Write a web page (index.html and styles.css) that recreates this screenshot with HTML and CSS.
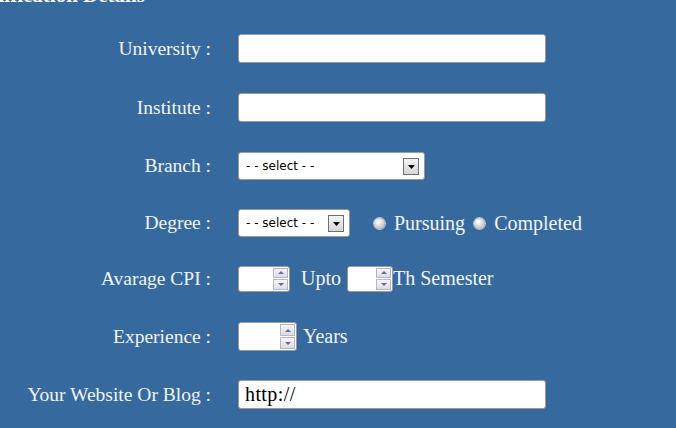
FILE: index.html
```html
<!DOCTYPE html>
<html>
<head>
<meta charset="utf-8">
<link rel="stylesheet" href="styles.css">
</head>
<body>
<h2 class="title">Qualification Details</h2>
<form class="form">
  <label class="lbl">University :</label>
  <div class="field"><input class="text" type="text"></div>

  <label class="lbl">Institute :</label>
  <div class="field"><input class="text" type="text"></div>

  <label class="lbl">Branch :</label>
  <div class="field">
    <div class="sel sel-wide"><span class="sel-text">- - select - -</span><span class="sel-btn"><svg width="7" height="4" viewBox="0 0 7 4"><path d="M0 0H7L3.5 4Z" fill="#000"/></svg></span></div>
  </div>

  <label class="lbl">Degree :</label>
  <div class="field">
    <div class="sel sel-narrow"><span class="sel-text">- - select - -</span><span class="sel-btn"><svg width="7" height="4" viewBox="0 0 7 4"><path d="M0 0H7L3.5 4Z" fill="#000"/></svg></span></div>
    <span class="radio"></span><span class="opt">Pursuing</span>
    <span class="radio"></span><span class="opt">Completed</span>
  </div>

  <label class="lbl">Avarage CPI :</label>
  <div class="field">
    <div class="num num-cpi"><span class="spin"><span class="sp up"><svg width="6" height="3" viewBox="0 0 6 3"><path d="M0 3H6L3 0Z" fill="#6a6a9a"/></svg></span><span class="sp dn"><svg width="6" height="3" viewBox="0 0 6 3"><path d="M0 0H6L3 3Z" fill="#6a6a9a"/></svg></span></span></div>
    <span class="word upto">Upto</span>
    <div class="num num-sem"><span class="spin"><span class="sp up"><svg width="6" height="3" viewBox="0 0 6 3"><path d="M0 3H6L3 0Z" fill="#6a6a9a"/></svg></span><span class="sp dn"><svg width="6" height="3" viewBox="0 0 6 3"><path d="M0 0H6L3 3Z" fill="#6a6a9a"/></svg></span></span></div>
    <span class="word">Th Semester</span>
  </div>

  <label class="lbl">Experience :</label>
  <div class="field">
    <div class="num num-exp"><span class="spin"><span class="sp up"><svg width="6" height="3" viewBox="0 0 6 3"><path d="M0 3H6L3 0Z" fill="#6a6a9a"/></svg></span><span class="sp dn"><svg width="6" height="3" viewBox="0 0 6 3"><path d="M0 0H6L3 3Z" fill="#6a6a9a"/></svg></span></span></div>
    <span class="word years">Years</span>
  </div>

  <label class="lbl">Your Website Or Blog :</label>
  <div class="field"><input class="text url" type="text" value="http://"></div>
</form>
</body>
</html>
```
FILE: styles.css
```css
html, body {
  margin: 0;
  padding: 0;
  background: #366a9f;
  overflow: hidden;
}
body {
  width: 676px;
  height: 428px;
  font-family: "Liberation Serif", "DejaVu Serif", serif;
  color: #f2f4f8;
}
.title {
  margin: -15px 0 0 -40px;
  height: 34px;
  font-size: 21px;
  line-height: 20px;
  font-weight: bold;
  color: #fff;
}
.form {
  display: grid;
  grid-template-columns: 211px 1fr;
  grid-template-rows: 59px 59px 58px 56px 55px 61px 55px;
  column-gap: 27px;
  align-items: center;
}
.lbl {
  text-align: right;
  font-size: 19.5px;
  white-space: nowrap;
}
.field {
  display: flex;
  align-items: center;
}
.text {
  box-sizing: border-box;
  width: 308px;
  height: 29px;
  border: 1px solid #9a9a9a;
  border-radius: 3px;
  background: #fff;
  padding: 0 6px;
  font-family: "Liberation Serif", serif;
  font-size: 20px;
  color: #000;
  outline: none;
}
.sel {
  position: relative;
  box-sizing: border-box;
  height: 28px;
  background: #fff;
  border: 1px solid #9a9a9a;
  border-radius: 3px;
  display: flex;
  align-items: center;
  padding-left: 7px;
}
.sel-wide { width: 187px; }
.sel-narrow { width: 112px; }
.sel-text {
  font-family: "DejaVu Sans", sans-serif;
  font-size: 12px;
  color: #000;
}
.sel-btn {
  position: absolute;
  right: 5px;
  top: 5px;
  box-sizing: border-box;
  width: 16px;
  height: 17px;
  border: 1px solid #6f6f6f;
  background: linear-gradient(#f4f4f4, #d6d6d6);
  display: flex;
  align-items: center;
  justify-content: center;
}
.radio {
  width: 11px;
  height: 11px;
  border-radius: 50%;
  background: radial-gradient(circle at 40% 35%, #ffffff 0, #e2e2e2 35%, #a9a9a9 100%);
  box-shadow: 0 0 0 1px #b9c6d6;
  margin-left: 24px;
  margin-right: 9px;
}
.opt + .radio { margin-left: 9px; }
.opt {
  font-size: 20px;
}
.num {
  position: relative;
  box-sizing: border-box;
  height: 26px;
  background: #fff;
  border: 1px solid #9a9a9a;
  border-radius: 3px;
}
.num-cpi { width: 52px; }
.num-sem { width: 46px; }
.num-exp { width: 59px; height: 29px; }
.spin {
  position: absolute;
  right: 1px;
  top: 1px;
  bottom: 1px;
  width: 15px;
  display: flex;
  flex-direction: column;
  gap: 1px;
}
.sp {
  flex: 1;
  box-sizing: border-box;
  border: 1px solid #b6b6c8;
  background: linear-gradient(#f6f6f8, #dcdce4);
  display: flex;
  align-items: center;
  justify-content: center;
}
.word {
  font-size: 20px;
}
.upto {
  margin: 0 6px 0 11px;
}
.years {
  margin-left: 6px;
}
.url {
  padding-left: 6px;
  letter-spacing: 0.4px;
}
```
